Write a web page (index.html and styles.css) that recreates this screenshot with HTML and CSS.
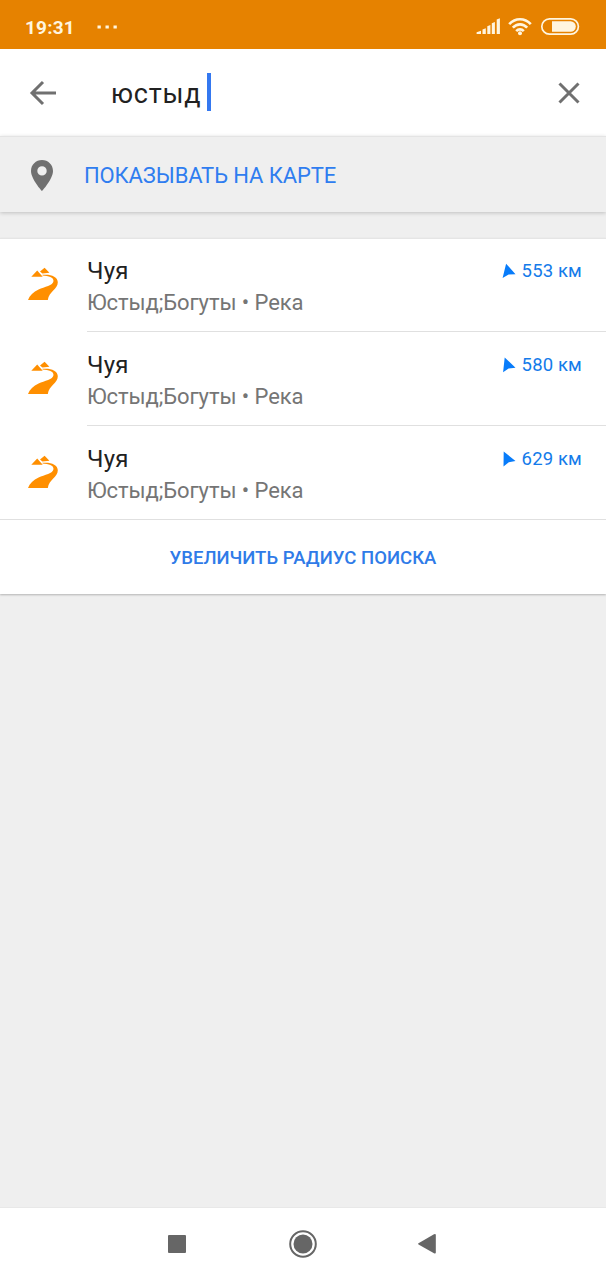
FILE: index.html
```html
<!DOCTYPE html>
<html lang="ru">
<head>
<meta charset="utf-8">
<title>Поиск</title>
<link rel="stylesheet" href="styles.css">
</head>
<body>
<svg width="0" height="0" class="defs">
  <symbol id="river" viewBox="0 0 32 34">
    <path d="M4.3 9.8 10.2 3.4 15.7 9.8ZM13 4.6 17.6 .8 22.4 5.8 15.4 6.6Z"/>
    <path d="M15.5 7.8C23.5 6.9 30.8 9.5 30.8 15.3 30.8 22.5 22 24.4 20.8 33H1C2.6 28.2 6.4 24.8 11.6 22.4 17.4 19.9 26.2 18.6 26.5 14 26.6 10.5 21.8 8.9 15.5 8.6Z"/>
  </symbol>
</svg>
<div class="screen">
  <header class="status">
    <span class="clock">19:31</span>
    <svg class="dots" width="22" height="4"><path d="M.5 .5h3.3v3H.5zM8.5 .5h3.3v3H8.500zM16.500 .5h3.300v3h-3.300z"/></svg>
    <svg class="indicators" width="104" height="20" viewBox="0 0 104 20">
      <path d="M.6 17V15.3L5 13.700v3.300ZM6.500 17v-4.500l3.300-1.200V17ZM11.300 17V9.200l3.100-1.200V17ZM15.800 17V6.200l3.100-1.200V17ZM20.700 17V2.500l3.200-1.200V17Z"/>
      <g class="ring" stroke-width="2.6"><path d="M33.200 7.200C39.400.5 48.600.5 54.800 7.200M36.800 10.700c4.200-4.500 10.200-4.500 14.400 0M40.200 14.200c2.200-2.400 5.400-2.400 7.600 0"/></g>
      <circle cx="44" cy="16.200" r="2"/>
      <rect class="ring" x="65.800" y="1.800" width="36.600" height="15.400" rx="7.700" stroke-width="1.700"/>
      <path d="M76 4.200h18.500a5.300 5.300 0 0 1 0 10.600H76Z"/>
    </svg>
  </header>
  <div class="search">
    <svg class="back" width="28" height="26" viewBox="0 0 28 26"><path d="M27 13H3M14 2 3 13 14 24"/></svg>
    <span class="query">юстыд</span><span class="caret"></span>
    <svg class="clear" width="22" height="22" viewBox="0 0 22 22"><path d="M1.500 1.500 20.500 20.500M20.500 1.500 1.500 20.500"/></svg>
  </div>
  <div class="show-map">
    <svg width="22" height="31" viewBox="0 0 22 31"><path fill-rule="evenodd" d="M11 0C4.900 0 0 4.800 0 10.900 0 19 11 31 11 31S22 19 22 10.900C22 4.800 17.100 0 11 0Zm0 6.200a4.700 4.700 0 1 1 0 9.400 4.700 4.700 0 0 1 0-9.400Z"/></svg>
    <span>ПОКАЗЫВАТЬ НА КАРТЕ</span>
  </div>
  <main class="results">
    <div class="row">
      <svg class="river"><use href="#river"/></svg>
      <div class="info">
        <div class="text"><div class="name">Чуя</div><div class="kind">Юстыд;Богуты • Река</div></div>
        <div class="distance"><svg width="14" height="16" viewBox="0 0 14 16"><path d="M4.100.7 13.500 11.200 6.600 11.500.6 14.900Z"/></svg>553 км</div>
      </div>
    </div>
    <div class="row">
      <svg class="river"><use href="#river"/></svg>
      <div class="info">
        <div class="text"><div class="name">Чуя</div><div class="kind">Юстыд;Богуты • Река</div></div>
        <div class="distance"><svg width="14" height="16" viewBox="0 0 14 16"><path d="M2.700.5 13.500 10.700 6.600 11.500 1.100 15.200Z"/></svg>580 км</div>
      </div>
    </div>
    <div class="row">
      <svg class="river"><use href="#river"/></svg>
      <div class="info">
        <div class="text"><div class="name">Чуя</div><div class="kind">Юстыд;Богуты • Река</div></div>
        <div class="distance"><svg width="14" height="16" viewBox="0 0 14 16"><path d="M1.700.5 13.500 10 6.800 11.300 1.500 15.400Z"/></svg>629 км</div>
      </div>
    </div>
    <div class="more">УВЕЛИЧИТЬ РАДИУС ПОИСКА</div>
  </main>
  <nav class="navbar">
    <svg width="20" height="20"><rect x="1" y="1" width="18" height="18" rx="1"/></svg>
    <svg class="home" width="28" height="28"><circle class="outline" cx="14" cy="14" r="12.800"/><circle cx="14" cy="14" r="9.500"/></svg>
    <svg width="20" height="22"><path d="M1.500 10.200 17 1.200Q18.800.3 18.800 2V19.500Q18.800 21.200 17 20.300L1.500 11.500Q.5 10.800 1.500 10.200Z"/></svg>
  </nav>
</div>
</body>
</html>
```
FILE: styles.css
```css
* { box-sizing: border-box; }
body { margin: 0; background: #efefef; font-family: Roboto, "Noto Sans", sans-serif; }
svg { display: block; flex: none; }
.defs { display: none; }
.screen { width: 606px; height: 1280px; display: flex; flex-direction: column; overflow: hidden; white-space: nowrap; }

.status { height: 49px; background: #e68200; display: flex; align-items: center; padding: 4px 25px 0; color: #fff5df; fill: #fff5df; }
.clock { width: 72px; padding-top: 2px; font-size: 19px; font-weight: 700; letter-spacing: .2px; line-height: 24px; }
.indicators { margin: 0 1px 0 auto; }
.ring { fill: none; stroke: #fff5df; }

.search { height: 87px; background: #fff; display: flex; align-items: center; padding: 0 26px 0 29px; }
.back, .clear { fill: none; stroke: #707070; stroke-width: 3; }
.query { width: 95px; margin-left: 54px; font-size: 27px; letter-spacing: .8px; line-height: 32px; color: #212121; padding-top: 2px; }
.caret { width: 4px; height: 38px; margin: 0 0 2px 1px; background: #3478f0; }
.clear { margin-left: auto; }

.show-map { height: 76px; border-top: 1px solid #e4e4e4; box-shadow: 0 1px 4px rgba(0, 0, 0, .2); display: flex; align-items: center; padding: 1px 31px 0; gap: 31px; color: #2f7df0; font-size: 22px; letter-spacing: -.12px; fill: #707070; }
.show-map span { padding-top: 1px; }

.results { margin-top: 26px; border-top: 1px solid #e5e5e5; background: #fff; box-shadow: 0 1px 2px rgba(0, 0, 0, .25); }
.row { height: 94px; display: flex; padding-left: 27px; }
.row:first-child { height: 93px; }
.river { width: 32px; height: 34px; margin-top: 29px; fill: #ff8f00; }
.row:first-child .river { margin-top: 28px; }
.info { flex: 1; margin-left: 28px; display: flex; justify-content: space-between; padding: 18px 24px 0 0; border-bottom: 1px solid #e0e0e0; }
.row:first-child .info { padding-top: 17px; }
.row:nth-child(3) { border-bottom: 1px solid #e0e0e0; }
.row:nth-child(3) .info { border-bottom: 0; }
.name { font-size: 24px; letter-spacing: .2px; line-height: 30px; color: #212121; }
.kind { font-size: 22px; letter-spacing: -.09px; line-height: 34px; color: #757575; }
.distance { height: 30px; display: flex; align-items: center; gap: 6px; font-size: 18.5px; letter-spacing: .15px; color: #147bea; fill: #087cfa; }
.more { height: 74px; display: flex; align-items: center; justify-content: center; padding-top: 1px; font-size: 18.5px; font-weight: 500; letter-spacing: .04px; color: #2f7be8; }

.navbar { height: 73px; margin-top: auto; background: #fff; border-top: 1px solid #e8e8e8; display: flex; align-items: center; padding: 0 169px 0 167px; justify-content: space-between; fill: #666; }
.home { margin: 0 -1px 0 1px; }
.outline { fill: none; stroke: #666; stroke-width: 2; }
```
